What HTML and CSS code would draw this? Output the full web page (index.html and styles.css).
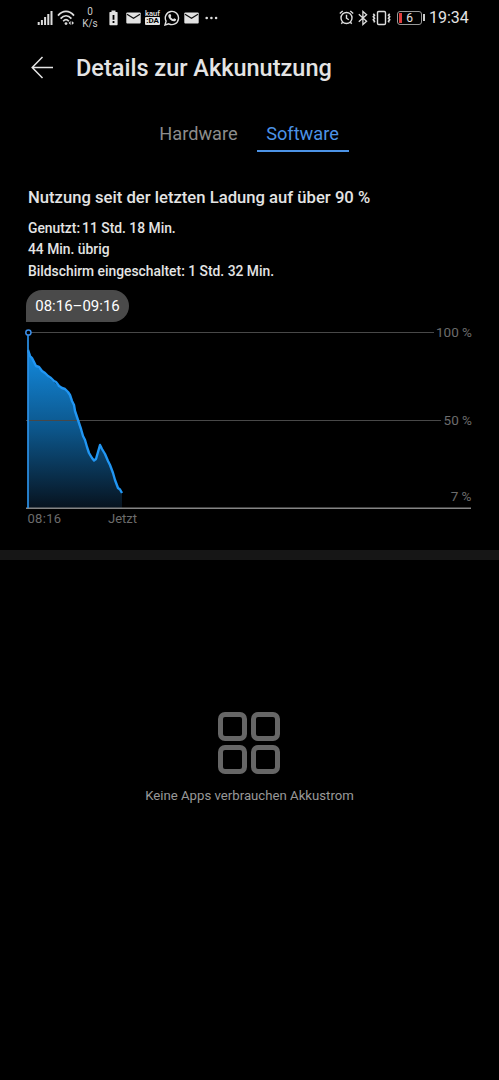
FILE: index.html
```html
<!DOCTYPE html>
<html lang="de">

<head>
    <meta charset="utf-8">
    <title>Details zur Akkunutzung</title>
    <meta name="viewport" content="width=device-width, initial-scale=1">
    <link rel="stylesheet" href="styles.css">
</head>

<body>
    <div class="statusbar">
        <div class="status-left">
            <svg class="signal" width="16" height="16" viewBox="0 0 16 16">
                <path d="M1.700 12v3M4.900 10v5M8.100 7v8M11.300 4v11M14.500 1v14" stroke="#ddd" stroke-width="2" />
            </svg>
            <svg class="wifi" width="19" height="16" viewBox="0 0 19 16" fill="none" stroke="#ddd" stroke-width="1.7">
                <path d="M1 5.6C5.500 0 12.500 0 17 5.600M3.600 8.600C7 4.800 11 4.800 14.400 8.600M6.200 11.200C8 9.200 10 9.200 11.800 11.200" />
                <circle cx="9" cy="13.600" r="1.400" fill="#ddd" stroke="none" />
                <path d="M13.600 11v4l-2-2zM14.800 11v4l2.200-2z" fill="#ddd" stroke="none" />
            </svg>
            <div class="speed"><span>0</span><span>K/s</span></div>
            <svg class="lowbat" width="9" height="16" viewBox="0 0 9 16">
                <path d="M2.500 0.500h4v1.500h1.500q.6 0 .6.600v12q0 .6-.6.600h-7q-.6 0-.6-.6v-12q0-.6.600-.6h1.500z" fill="#e2e2e2" />
                <path d="M4.500 5v4.800M4.500 11v2" stroke="#000" stroke-width="1.800" />
            </svg>
            <svg class="mail" width="15" height="12" viewBox="0 0 15 12">
                <rect x=".3" y=".5" width="14.400" height="11" rx="1" fill="#e2e2e2" />
                <path d="M1 2.200l6.500 4 6.500-4" fill="none" stroke="#111" stroke-width="1.200" />
            </svg>
            <div class="kaufda"><span>kauf</span><span class="da">:DA</span></div>
            <svg class="whatsapp" width="16" height="16" viewBox="0 0 16 16">
                <path d="M1 15l1.100-3.900a6.600 6.600 0 1 1 2.700 2.700z" fill="none" stroke="#e2e2e2" stroke-width="1.400" />
                <path d="M5.200 4.200l1.200-.2.900 2-.7 1q.9 1.600 2.500 2.300l1-1.100 2 1c0 1.500-1.100 2.200-2.300 2.100C7 11 4.500 8.300 4.300 6q0-1.200.9-1.800z" fill="#e2e2e2" />
            </svg>
            <svg class="mail" width="15" height="12" viewBox="0 0 15 12">
                <rect x=".3" y=".5" width="14.400" height="11" rx="1" fill="#e2e2e2" />
                <path d="M1 2.200l6.500 4 6.500-4" fill="none" stroke="#111" stroke-width="1.200" />
            </svg>
            <svg class="more" width="13" height="4" viewBox="0 0 13 4" fill="#ddd">
                <circle cx="1.700" cy="2" r="1.300" /><circle cx="6.400" cy="2" r="1.300" /><circle cx="11.100" cy="2" r="1.300" />
            </svg>
        </div>
        <div class="status-right">
            <svg class="alarm" width="15" height="15" viewBox="0 0 15 15" fill="none" stroke="#ddd" stroke-width="1.400">
                <circle cx="7.500" cy="8" r="5.500" />
                <path d="M7.500 4.800V8.200l2.300 1.600M.8 3.500L3.700 1M14.200 3.500L11.300 1M3.600 12.300l-1.300 1.500M11.400 12.300l1.300 1.500" />
            </svg>
            <svg class="bluetooth" width="10" height="16" viewBox="0 0 10 16" fill="none" stroke="#ddd" stroke-width="1.300">
                <path d="M.8 4.300L8.600 11.300 4.900 14.500V1.500L8.600 4.700.8 11.700" />
            </svg>
            <svg class="vibrate" width="19" height="16" viewBox="0 0 19 16" fill="none" stroke="#ddd" stroke-width="1.400">
                <rect x="5.500" y="1.500" width="8" height="13" rx="1.200" />
                <path d="M1.300 3.700l1.200 1.500-1.200 1.500 1.200 1.500-1.200 1.500 1.200 1.500-.8 1.200M17.700 3.700l-1.200 1.500 1.200 1.500-1.200 1.500 1.200 1.500-1.200 1.500.8 1.200" stroke-width="1.600" />
            </svg>
            <div class="battery"><span class="level"></span>6</div>
            <span class="nub"></span>
            <span class="clock">19:34</span>
        </div>
    </div>

    <header class="header">
        <svg class="back" width="23" height="23" viewBox="0 0 23 23" fill="none" stroke="#e4e4e4" stroke-width="1.500">
            <path d="M11.500 1L1.200 11.500 11.500 22M1.200 11.500H22" />
        </svg>
        <h1>Details zur Akkunutzung</h1>
    </header>

    <nav class="tabs">
        <a class="tab">Hardware</a>
        <a class="tab active">Software</a>
    </nav>

    <section class="usage">
        <h2>Nutzung seit der letzten Ladung auf über 90 %</h2>
        <p><span class="used">Genutzt:</span>11 Std. 18 Min.</p>
        <p class="left">44 Min. übrig</p>
        <p class="screen">Bildschirm eingeschaltet: 1 Std. 32 Min.</p>
        <div class="bubble">08:16–09:16</div>
        <svg class="chart" width="459" height="204" viewBox="20 325 459 204">
            <defs>
                <linearGradient id="fill" x1="0" y1="350" x2="0" y2="508" gradientUnits="userSpaceOnUse">
                    <stop offset="0" stop-color="#138be0" />
                    <stop offset=".5" stop-color="#0c568b" />
                    <stop offset="1" stop-color="#07131f" />
                </linearGradient>
            </defs>
            <path class="area" d="M28 350L32 359 36 366 42 371 48 377 54 382 59 387 66 390 70 396 74 406 79 422 83 435 88 451 92 458 95 461 97 457 99 446 103 451 108 461 113 474 118 489 122 493V508H28z" fill="url(#fill)" />
            <path d="M28 332.500H434M26 420.500H441" stroke="#484848" />
            <path d="M26 508.300H471" stroke="#858585" stroke-width="1.400" />
            <path class="line" d="M28 350L30 356 32 358 34 362 36 366 39 367 42 371 45 373 48 376 51 378 54 381 56 382 59 386 62 388 65 389 68 392 70 395 72 401 74 405 75 411 77 417 79 423 81 429 83 436 85 440 87 447 89 453 92 458 94 460.500 96 459 98 452 100 445 102 449 105 454 108 461 110 465 113 473 115 480 118 488 120 489.500 122 493" />
            <path d="M28 335V508" stroke="#2b91e8" stroke-width="1.700" />
            <circle cx="28.400" cy="332.500" r="2.600" fill="#000" stroke="#3b8ee8" stroke-width="1.500" />
            <g class="ylabels">
                <text x="472" y="337.200">100 %</text>
                <text x="472" y="425.200">50 %</text>
                <text x="471.500" y="501.200">7 %</text>
            </g>
            <g class="xlabels">
                <text x="27.500" y="523.400" letter-spacing=".3">08:16</text>
                <text x="108" y="523.400">Jetzt</text>
            </g>
        </svg>
    </section>

    <div class="divider"></div>

    <section class="empty">
        <div class="grid">
            <span></span><span></span><span></span><span></span>
        </div>
        <p>Keine Apps verbrauchen Akkustrom</p>
    </section>
</body>

</html>
```
FILE: styles.css
```css
* {
    box-sizing: border-box;
}

body {
    margin: 0;
    background: #000;
    color: #e4e4e4;
    font-family: Roboto, "Liberation Sans", sans-serif;
}

h1, h2, p {
    margin: 0;
    white-space: nowrap;
}

svg {
    display: block;
    flex: none;
}

/* status bar */
.statusbar {
    display: flex;
    justify-content: space-between;
    height: 35px;
    padding: 0 30px 0 37px;
}

.status-left, .status-right {
    display: flex;
    align-items: center;
}

.wifi {
    margin-left: 4px;
}

.speed {
    display: flex;
    flex-direction: column;
    align-items: center;
    width: 20px;
    margin-left: 4px;
    font-size: 10px;
    line-height: 12px;
    color: #ccc;
}

.lowbat {
    margin-left: 9px;
}

.mail {
    margin-left: 8px;
}

.whatsapp + .mail {
    margin-left: 4px;
}

.kaufda {
    display: flex;
    flex-direction: column;
    width: 15px;
    margin-left: 4px;
    font-size: 7.500px;
    line-height: 7px;
    font-weight: 500;
}

.da {
    height: 8px;
    background: #e2e2e2;
    color: #000;
    border-radius: 1px;
    font-size: 8px;
    font-weight: 700;
    line-height: 8px;
    text-align: center;
}

.whatsapp {
    margin-left: 4px;
}

.more {
    margin-left: 6px;
}

.bluetooth {
    margin-left: 4px;
}

.vibrate {
    margin-left: 4px;
}

.battery {
    display: flex;
    align-items: center;
    justify-content: center;
    position: relative;
    width: 25px;
    height: 14px;
    margin-left: 6px;
    border: 1px solid #999;
    border-radius: 3px;
    font-size: 12px;
}

.level {
    position: absolute;
    left: 1px;
    top: 1px;
    width: 3px;
    height: 10px;
    background: #e03c3c;
}

.nub {
    width: 2px;
    height: 7px;
    margin-left: 1px;
    background: #ccc;
}

.clock {
    width: 40px;
    margin-left: 4px;
    font-size: 16px;
    white-space: nowrap;
}

/* title and tabs */
.header {
    display: flex;
    align-items: center;
    height: 65px;
    padding-left: 31px;
}

h1 {
    margin-left: 22px;
    font-size: 23.500px;
    font-weight: 500;
}

.tabs {
    display: flex;
    justify-content: center;
    padding: 16px 0 0 2px;
}

.tab {
    width: 92px;
    height: 36px;
    margin: 0 6px;
    line-height: 35px;
    font-size: 18.200px;
    text-align: center;
    color: #8c8c8c;
}

.active {
    color: #4c93e6;
    border-bottom: 2px solid #4c93e6;
}

/* usage */
.usage {
    padding: 35px 20px 0 28px;
    font-size: 13.850px;
    line-height: 21.500px;
    font-weight: 500;
}

h2 {
    height: 30.500px;
    font-size: 16.650px;
    line-height: 22px;
    font-weight: 500;
}

.used {
    margin-right: 2px;
}

.bubble {
    width: 103px;
    height: 32px;
    margin: 8px 0 0 -2px;
    border-radius: 16px 16px 16px 0;
    background: #4a4a4a;
    color: #fff;
    font-size: 15px;
    font-weight: 400;
    line-height: 33px;
    text-align: center;
}

.chart {
    margin: 3px 0 0 -8px;
    font-size: 13.500px;
    font-weight: 400;
}

.chart text {
    fill: #6c6c6c;
}

.ylabels {
    text-anchor: end;
}

.xlabels {
    font-size: 13px;
}

.line {
    fill: none;
    stroke: #2196f3;
    stroke-width: 2.400;
    stroke-linejoin: round;
}

.divider {
    height: 10px;
    margin-top: 21px;
    background: #161616;
}

/* empty state */
.empty {
    display: flex;
    flex-direction: column;
    align-items: center;
    padding-top: 152px;
    font-size: 13.200px;
    color: #999;
}

.grid {
    display: grid;
    grid-template-columns: 29px 29px;
    grid-auto-rows: 29px;
    gap: 4px;
    margin-right: 1px;
}

.grid span {
    border: 5px solid #666;
    border-radius: 7px;
}

.empty p {
    margin-top: 14px;
}
```
